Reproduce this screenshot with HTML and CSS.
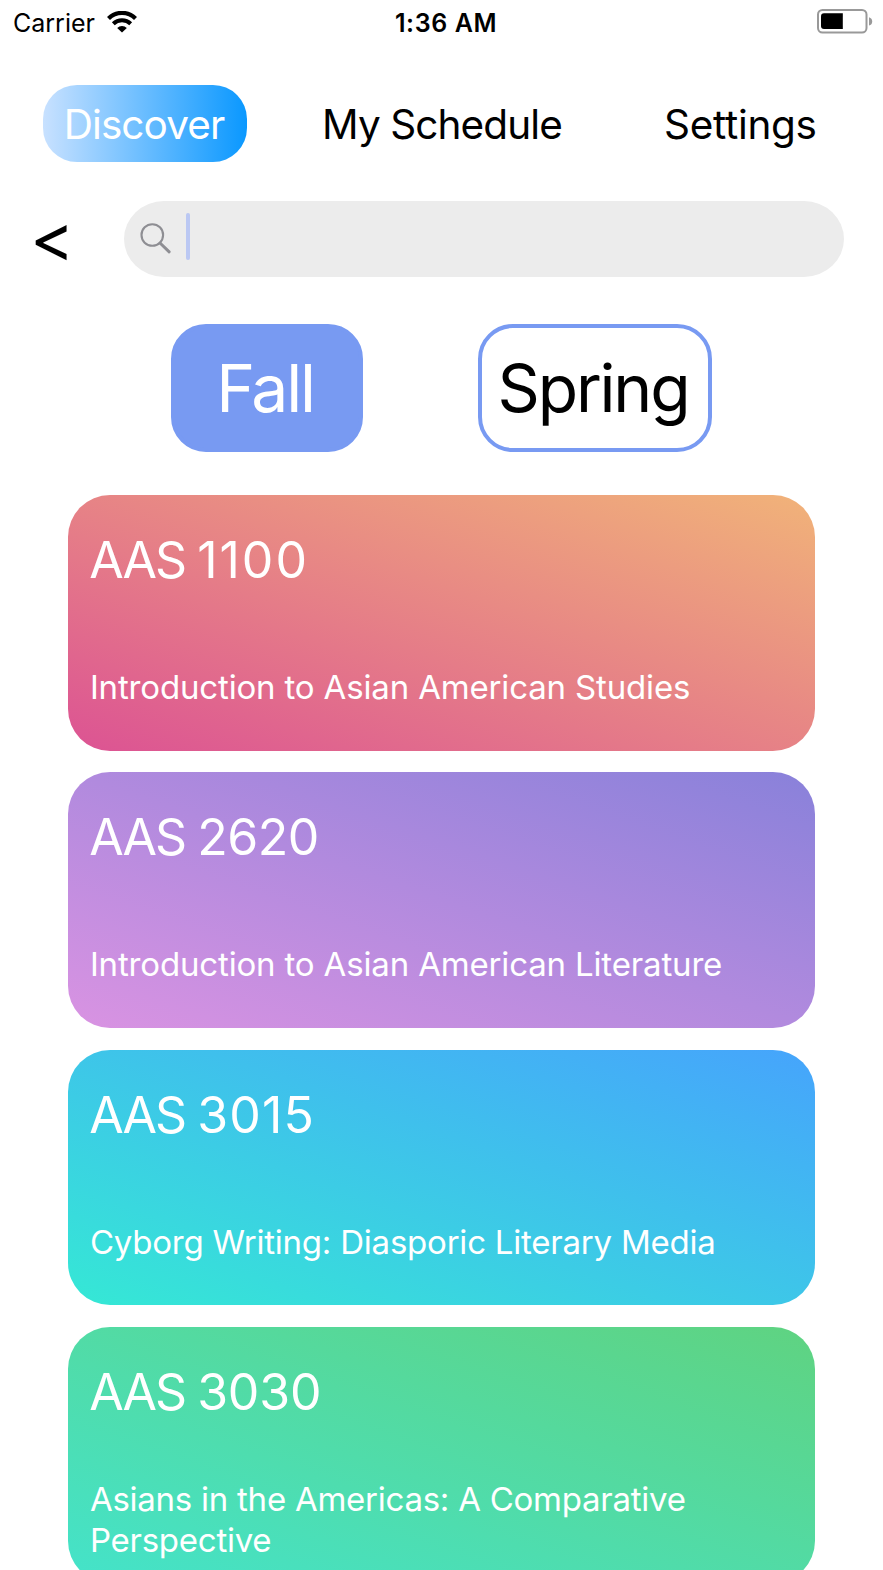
FILE: index.html
```html
<!DOCTYPE html>
<html lang="en">
<head>
<meta charset="utf-8">
<title>Discover</title>
<link rel="stylesheet" href="styles.css">
</head>
<body>
<header class="status">
  <div class="status-left">
    <span class="carrier">Carrier</span>
    <svg class="wifi" viewBox="0 0 30 22" width="30" height="22">
      <path d="M1.5 7.4 A19.2 19.2 0 0 1 28.5 7.4" fill="none" stroke="#000" stroke-width="4.2"/>
      <path d="M6.3 12.7 A12.4 12.4 0 0 1 23.7 12.7" fill="none" stroke="#000" stroke-width="4"/>
      <path d="M10.2 17 A6.9 6.9 0 0 1 19.8 17 L15 21.6 Z"/>
    </svg>
  </div>
  <span class="time">1:36 AM</span>
  <svg class="battery" viewBox="0 0 56 25" width="56" height="25">
    <rect x="1" y="1" width="48.5" height="22.5" rx="4.5" fill="none" stroke="#999" stroke-width="2"/>
    <path d="M7 4.2H25.8V20H7A3 3 0 0 1 4 17V7.2A3 3 0 0 1 7 4.2Z"/>
    <path d="M52 8.2Q55.2 9.2 55.2 12.4T52 16.6Z" fill="#999"/>
  </svg>
</header>
<nav class="tabs">
  <a class="tab tab-active">Discover</a>
  <a class="tab tab-schedule">My Schedule</a>
  <a class="tab tab-settings">Settings</a>
</nav>
<div class="search-row">
  <a class="back">&lt;</a>
  <div class="search">
    <svg viewBox="0 0 32 32" width="32" height="32" fill="none" stroke="#8e8e93">
      <circle cx="12.3" cy="12" r="10.8" stroke-width="2.1"/>
      <path d="M20 20L29.2 28.8" stroke-width="3" stroke-linecap="round"/>
    </svg>
    <i class="caret"></i>
  </div>
</div>
<div class="terms">
  <a class="term term-fall">Fall</a>
  <a class="term term-spring">Spring</a>
</div>
<main class="courses">
  <article class="course pink"><h2>AAS <span>1100</span></h2><p>Introduction to Asian American Studies</p></article>
  <article class="course purple"><h2>AAS <span>2620</span></h2><p>Introduction to Asian American Literature</p></article>
  <article class="course blue"><h2>AAS <span>3015</span></h2><p>Cyborg Writing: Diasporic Literary Media</p></article>
  <article class="course green"><h2>AAS <span>3030</span></h2><p>Asians in the Americas: A Comparative<br>Perspective</p></article>
</main>
</body>
</html>
```
FILE: styles.css
```css
* { box-sizing: border-box; }
body {
  margin: 0;
  width: 883px;
  height: 1570px;
  overflow: hidden;
  background: #fff;
  color: #000;
  font-family: Inter, "Liberation Sans", sans-serif;
}
.status {
  display: grid;
  grid-template-columns: 1fr auto 1fr;
  align-items: center;
  height: 45px;
  padding: 0 10px 0 13px;
  font-size: 25px;
  line-height: 30px;
}
.status-left { display: flex; align-items: center; gap: 12px; }
.wifi { margin-top: -2px; }
.time { font-weight: 600; letter-spacing: .6px; padding-left: 6px; }
.battery { justify-self: end; margin-top: -2px; }
.tabs {
  display: flex;
  align-items: center;
  height: 77px;
  margin-top: 40px;
  padding-left: 43px;
  font-size: 40.5px;
}
.tab { white-space: nowrap; line-height: 79px; }
.tab-active {
  width: 204px;
  height: 77px;
  padding-right: 2px;
  border-radius: 34px;
  text-align: center;
  letter-spacing: -.9px;
  color: #fff;
  background: linear-gradient(90deg, #c8e1ff, #0a98ff);
}
.tab-schedule { margin: 1px 0 0 75px; width: 342px; letter-spacing: -.9px; }
.tab-settings { margin-top: 1px; letter-spacing: -.3px; }
.search-row {
  display: flex;
  height: 76px;
  margin-top: 39px;
  padding-left: 30px;
}
.back { width: 94px; font-size: 67px; line-height: 74px; }
.search {
  display: flex;
  align-items: flex-start;
  width: 720px;
  height: 76px;
  padding: 12px 16px;
  border-radius: 40px / 38px;
  background: #ececec;
}
.search svg { margin-top: 10px; }
.caret { width: 4px; height: 47px; margin-left: 14px; border-radius: 2px; background: #bbc8f3; }
.terms { display: flex; gap: 115px; margin-top: 47px; padding-left: 171px; }
.term {
  height: 128px;
  padding-right: 4px;
  border: 4px solid #789af2;
  border-radius: 35px;
  font-size: 66px;
  line-height: 121px;
  text-align: center;
  letter-spacing: -2.2px;
}
.term-fall { width: 192px; background: #789af2; color: #fff; }
.term-spring { width: 234px; }
.courses { display: flex; flex-direction: column; gap: 21.8px; margin: 43px 0 0 68.3px; }
.course {
  display: flex;
  flex-direction: column;
  justify-content: space-between;
  width: 746.7px;
  height: 255.6px;
  padding: 35px 21px 43px;
  border-radius: 42px;
  color: #fff;
}
.course h2 { margin: 0; font-size: 50px; line-height: 60px; font-weight: 400; letter-spacing: -2px; }
.course h2 span { letter-spacing: -.5px; }
.course p { margin: 0 0 0 .6px; font-size: 33px; line-height: 40.7px; letter-spacing: -.16px; white-space: nowrap; }
.pink { background: linear-gradient(to top right, #dc5393, #f1b379); }
.course.pink h2 span { letter-spacing: 2px; }
.purple { background: linear-gradient(to top right, #d993e2, #8981da); }
.blue { background: linear-gradient(to top right, #35e8d5, #46a4fc); }
.course.blue h2 span { letter-spacing: 1.2px; }
.course.blue p { letter-spacing: -.22px; }
.green { background: linear-gradient(to top right, #44e3ca, #5fd381); }
.course.green { padding-bottom: 22px; }
.course.green h2 span { letter-spacing: -.2px; }
.course.green p { letter-spacing: -.25px; }
```
